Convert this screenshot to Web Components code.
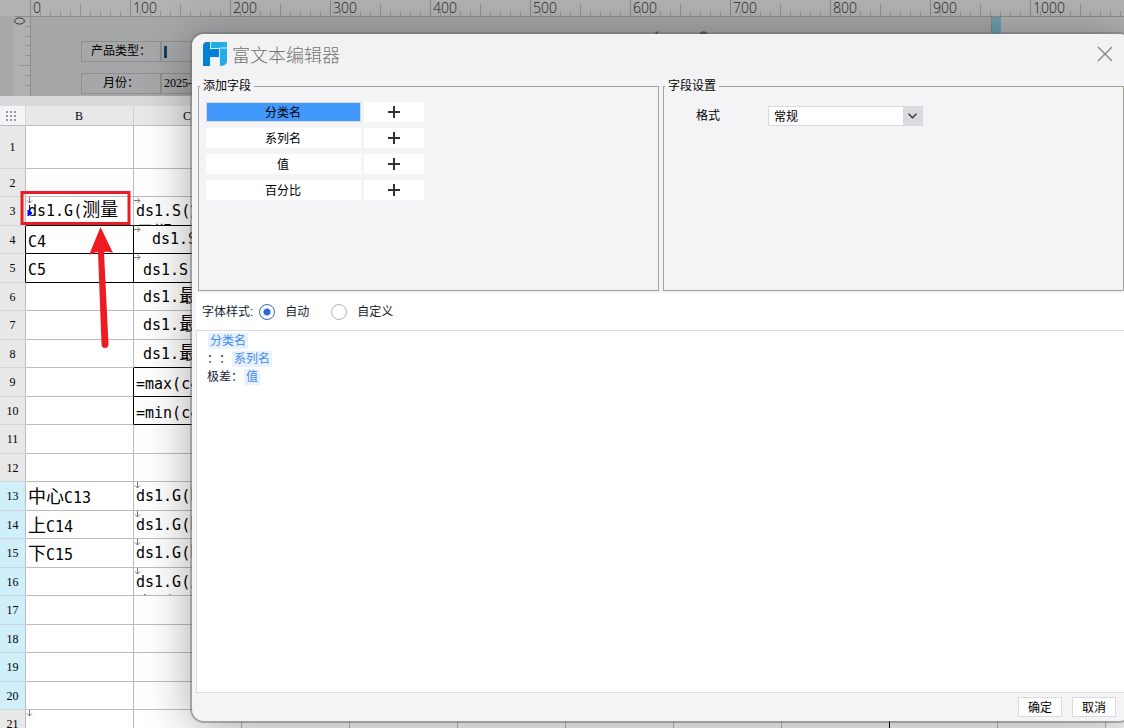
<!DOCTYPE html>
<html lang="zh-CN">
<head>
<meta charset="utf-8">
<title>富文本编辑器</title>
<style>
html, body { margin: 0; height: 100%; overflow: hidden; }
body { font: 12px/18px "Liberation Sans", "Noto Sans CJK SC", sans-serif; color: #000; text-spacing-trim: space-all; }
</style>
</head>
<body>
<report-designer>
  <param-pane slot="params"></param-pane>
  <report-sheet slot="sheet"></report-sheet>
  <red-marker slot="overlay"></red-marker>
  <modal-window slot="overlay" heading="富文本编辑器">
    <div slot="fields" style="display:contents">
      <field-group label="添加字段"><field-list></field-list></field-group>
      <field-group label="字段设置"><format-setting></format-setting></field-group>
    </div>
    <font-style-bar slot="style"></font-style-bar>
    <rich-editor slot="editor">
      <div><field-chip>分类名</field-chip></div>
      <div>：：<field-chip>系列名</field-chip></div>
      <div>极差：<field-chip>值</field-chip></div>
    </rich-editor>
    <push-button slot="actions">确定</push-button>
    <push-button slot="actions">取消</push-button>
  </modal-window>
</report-designer>

<script>
function define(name, html, setup) {
  customElements.define(name, class extends HTMLElement {
    connectedCallback() {
      if (this.shadowRoot) return;
      const root = this.attachShadow({ mode: 'open' });
      root.innerHTML = html;
      if (setup) setup(root, this);
    }
  });
}

define('report-designer', `
<style>
:host { display: flex; flex-direction: column; position: relative; height: 100vh; overflow: hidden; background: #d9d9dc; }
main { flex: 1; min-height: 0; overflow: hidden; padding-top: 10px; }
</style>
<slot name="params"></slot>
<main><slot name="sheet"></slot></main>
<slot name="overlay"></slot>`);

define('ruler-unit', `
<style>
:host { display: block; flex: none; box-sizing: border-box; width: 100px; height: 16px; padding-left: 3px;
  font: 300 14px/16px "Open Sans", sans-serif; color: #222;
  background:
    linear-gradient(#8b8b8b, #8b8b8b) 0 0 / 1px 16px no-repeat,
    linear-gradient(#929292, #929292) 50px 4px / 1px 12px no-repeat,
    repeating-linear-gradient(90deg, #929292 0 1px, transparent 1px 10px) 0 11px / 100px 5px no-repeat; }
</style>
<slot></slot>`);

define('param-pane', `
<style>
:host { display: grid; grid-template: 16px 80px / 14px 17px 1fr; flex: none; overflow: hidden; background: #a9a9a9; }
.top { grid-column: 1 / -1; display: flex; padding-left: 30px; background: #b2b2b2; min-width: 0; overflow: hidden; }
.side { grid-column: 2; background: #b0b0b0; border-right: 1px solid #8b8b8b; border-top: 1px solid #8b8b8b; display: block; }
.board { display: flex; border-top: 1px solid #8b8b8b; background: #b0b0b0; }
.canvas { width: 961px; flex: none; background: #a5a7a9; border-right: 1px solid #858585; position: relative; box-sizing: border-box; padding: 24px 0 0 50px; }
.bar { width: 9px; background: #6c9fac; }
form { display: grid; grid-template-columns: 79px 130px; row-gap: 11px; }
form > * { box-sizing: border-box; height: 21px; border: 1px solid #8e8e8e; }
label { text-align: center; line-height: 19px; border-right: 0 !important; }
input { font: 12px/19px "Liberation Serif", serif; background: transparent; padding: 0 2px; border-left-width: 2px !important; min-width: 0; width: 130px; border-radius: 0; color: #000; }
.mark { position: absolute; left: 133px; top: 29px; width: 3px; height: 12px; background: #163c66; }
.title { position: absolute; left: 618px; top: 12px; }
</style>
<div class="top"></div>
<svg class="side" width="16" height="79" viewBox="0 0 16 79">
  <path d="M11 9.500h5M11 19.500h5M11 28.500h5M11 38.500h5M5 48.500h11M11 58.500h5M11 68.500h5" stroke="#929292"/>
  <ellipse cx="5.500" cy="4" rx="4.800" ry="3" fill="none" stroke="#333"/>
</svg>
<div class="board">
  <div class="canvas">
    <form>
      <label for="type">产品类型：</label><input id="type">
      <label for="month">月份：</label><input id="month" value="2025-10">
    </form>
    <i class="mark"></i>
    <svg class="title" width="60" height="8" aria-hidden="true"><path d="M5 5l4-3v2l-2 3zM50 7c0-6 9-6 9 0z" fill="#333"/></svg>
  </div>
  <div class="bar"></div>
</div>`, root => {
  const top = root.querySelector('.top');
  for (let v = 0; v <= 1000; v += 100) {
    const unit = document.createElement('ruler-unit');
    unit.textContent = v;
    top.append(unit);
  }
});

const cells = {
  B3: { text: 'ds1.G(测量', cls: 'top', mark: 'down' },
  C3: { text: 'ds1.S(测量\n日期)', cls: 'top', mark: 'right' },
  B4: { text: 'C4' }, C4: { text: 'ds1.S(', cls: 'top in2', mark: 'right' },
  B5: { text: 'C5' }, C5: { text: 'ds1.S', cls: 'in1', mark: 'right' },
  C6: { text: 'ds1.最大', cls: 'top in1' },
  C7: { text: 'ds1.最小', cls: 'top in1' },
  C8: { text: 'ds1.最近', cls: 'top in1' },
  C9: { text: '=max(c4)' }, C10: { text: '=min(c4)' },
  B13: { text: '中心C13' }, C13: { text: 'ds1.G(时', cls: 'top', mark: 'down' },
  B14: { text: '上C14' }, C14: { text: 'ds1.G(时', cls: 'top', mark: 'down' },
  B15: { text: '下C15' }, C15: { text: 'ds1.G(时', cls: 'top', mark: 'down' },
  C16: { text: 'ds1.G(人\n类别)', cls: 'top', mark: 'down' },
  B21: { text: '', mark: 'down' }
};
const boxed = { B3: 'bb', C3: 'bb', B4: 'bb br', C4: 'bb br', B5: 'bb br', C5: 'bb br', C8: 'bb', B9: 'br', C9: 'bb br', B10: 'br', C10: 'bb br', I21: 'br' };
const marks = {
  down: '<svg class="mark" viewBox="0 0 7 7"><path d="M3.500 0v6M1 3.500l2.500 2.500L6 3.500" /></svg>',
  right: '<svg class="mark" viewBox="0 0 7 7"><path d="M0 3.500h6M3.500 1L6 3.500 3.500 6" /></svg>'
};

define('report-sheet', `
<style>
:host { display: block; }
table { border-collapse: separate; border-spacing: 0; table-layout: fixed; width: 1214px; background: #fff; }
col.head { width: 26px; } col.data { width: 108px; }
th, td { padding: 0; box-sizing: border-box; border-right: 1px solid #bcbcbc; border-bottom: 1px solid #bcbcbc; }
th { background: #e8e8e8; font: 400 12px/18px "Liberation Serif", serif; text-align: center; }
thead th { height: 20px; border-right-color: #cfcfcf; padding-right: 1px; }
thead th:first-child { background: #f4f4f8; border-right-color: #d5d5db; }
thead svg { display: block; margin: 1px 0 0 6px; }
tbody th { font: 400 12px/18px "Liberation Serif", serif; border-bottom-color: #d4d4da; }
tr.blue th { background: #cfeffa; }
tbody tr:nth-child(odd) { height: 29px; }
tbody tr:nth-child(even) { height: 28px; }
tbody tr:first-child { height: 43px; }
.cell { position: relative; box-sizing: border-box; overflow: hidden; white-space: pre; height: 27px; padding-left: 2px; font: 15px/32px "DejaVu Sans Mono", monospace; }
tr:nth-child(odd) .cell { height: 28px; }
.cell span { font: 18px/18px "Noto Sans CJK SC", sans-serif; }
.cell.top { line-height: 22px; padding-top: 2px; } .in1 { padding-left: 9px; } .in2 { padding-left: 18px; }
.mark { position: absolute; left: 0; top: 0; width: 7px; height: 7px; fill: none; stroke: #777; }
.bb { border-bottom-color: #000; } .br, th.br { border-right-color: #000; }
</style>
<table><colgroup></colgroup><thead></thead><tbody></tbody></table>`, root => {
  const letters = 'BCDEFGHIJKL'.split('');
  root.querySelector('colgroup').innerHTML = '<col class="head">' + letters.map(() => '<col class="data">').join('');
  let dots = '';
  for (let y = 0; y < 3; y++) for (let x = 0; x < 3; x++) dots += `<rect x="${x * 4}" y="${y * 4}" width="2" height="2"/>`;
  root.querySelector('thead').innerHTML = `<tr><th><svg width="11" height="10" fill="#999">${dots}</svg></th>` +
    letters.map(l => `<th scope="col">${l}</th>`).join('') + '</tr>';
  let rows = '';
  for (let r = 1; r <= 21; r++) {
    rows += `<tr class="${r > 12 && r < 21 ? 'blue' : ''}"><th scope="row" class="${r === 4 || r === 5 ? 'br' : ''}">${r}</th>`;
    for (const l of letters) {
      const c = cells[l + r];
      const body = c ? `<div class="cell ${c.cls || ''}">${marks[c.mark] || ''}${c.text.replace(/[\u4e00-\u9fff]+/g, '<span>$&</span>')}</div>` : '';
      rows += `<td class="${boxed[l + r] || ''}">${body}</td>`;
    }
    rows += '</tr>';
  }
  root.querySelector('tbody').innerHTML = rows;
});

define('red-marker', `
<style>:host { display: block; position: absolute; left: 20px; top: 190px; } svg { display: block; }</style>
<svg width="112" height="160" viewBox="0 0 112 160">
  <path d="M9.500 15v10M8 20l4 3-4 3z" stroke="#00f" fill="#00f"/>
  <rect x="2" y="2.500" width="107" height="31" fill="none" stroke="#ed1c24" stroke-width="3"/>
  <path d="M80.500 37L93 63Q88 61 84 62L88.500 154Q88.500 158 85 158Q81.500 158 81.500 154L78 62Q74 62 69 65Z" fill="#ed1c24"/>
</svg>`);

define('modal-window', `
<style>
:host { position: absolute; inset: 34px -7px 7px 192px; display: flex; flex-direction: column; border-radius: 12px; background: #f4f4f7;
  box-shadow: 0 0 0 2px rgba(110,110,110,.5), 0 6px 50px rgba(0,0,0,.36); }
header { display: flex; align-items: center; gap: 5px; height: 43px; box-sizing: border-box; padding: 0 18px 3px 11px; background: #f2f2f2; border-radius: 12px 12px 0 0; flex: none; }
h1 { flex: 1; margin: 0; font: 300 18px/24px "Noto Sans CJK SC", sans-serif; color: #757575; }
header button { border: 0; padding: 0; background: none; width: 16px; height: 16px; }
svg { display: block; }
.fields { display: flex; gap: 4px; padding: 0 7px 0 6px; }
.lower { flex: 1; display: flex; flex-direction: column; min-height: 0; margin: 2px 0 0 4px; background: #fff; }
footer { display: flex; justify-content: flex-end; gap: 10px; padding: 4px 15px 4px 0; }
</style>
<header>
  <svg width="24" height="24" viewBox="0 0 24 24">
    <path d="M4 0H8V6.500H15V15H7V24H0V4Q0 0 4 0Z" fill="#0580d8"/>
    <path d="M8 0H24V20Q23 24 17 24V14H16V6.500H8Z" fill="#22ade6"/>
    <path d="M7 7H16V15H7Z" fill="#0580d8"/>
    <path d="M7.500 0V7.500M7.500 6.500H15M16.500 24V6H24M7.500 24V15.500H16" fill="none" stroke="#d6effb"/>
  </svg>
  <h1></h1>
  <button aria-label="关闭"><svg width="16" height="16" viewBox="0 0 16 16"><path d="M1 1l14 14M15 1L1 15" stroke="#858585" stroke-width="1.300"/></svg></button>
</header>
<div class="fields"><slot name="fields"></slot></div>
<div class="lower"><slot name="style"></slot><slot name="editor"></slot></div>
<footer><slot name="actions"></slot></footer>`, (root, host) => {
  root.querySelector('h1').textContent = host.getAttribute('heading');
});

define('field-group', `
<style>
:host { display: block; flex: 1; min-width: 0; }
fieldset { box-sizing: border-box; height: 214px; margin: 0; border: 1px solid #a2a298; padding: 7px; min-width: 0; }
legend { padding: 0 3px; margin-left: -6px; line-height: 18px; }
</style>
<fieldset><legend></legend><slot></slot></fieldset>`, (root, host) => {
  root.querySelector('legend').textContent = host.getAttribute('label');
});

define('field-list', `
<style>
:host { display: grid; grid-template-columns: 155px 60px; gap: 6px 3px; }
button { height: 20px; border: 0; padding: 0 1px 0 0; background: #fff; font: inherit; line-height: 22px; color: #000; display: grid; place-items: center; border-radius: 0; }
.selected { background: #4099fa; border: 1px solid #d6d8dc; line-height: 20px; }
</style>`, root => {
  root.innerHTML += ['分类名', '系列名', '值', '百分比'].map((n, i) =>
    `<button class="${i ? '' : 'selected'}">${n}</button><button aria-label="添加${n}"><svg width="12" height="12"><path d="M6 0v12M0 6h12" stroke="#333" stroke-width="2"/></svg></button>`).join('');
});

define('format-setting', `
<style>
:host { display: grid; grid-template-columns: 72px 155px; align-items: center; padding: 4px 0 0 25px; }
label { line-height: 20px; }
.box { display: grid; align-items: center; }
select, .box svg { grid-area: 1 / 1; }
select { appearance: none; height: 20px; box-sizing: border-box; border: 1px solid #d8dade; border-radius: 0; padding: 0 24px 0 5px; font: inherit; line-height: 20px; color: #000;
  background: linear-gradient(#d8dade, #d8dade) right / 19px 100% no-repeat #fff; }
.box svg { justify-self: end; margin-right: 6px; pointer-events: none; }
</style>
<label for="format">格式</label>
<div class="box"><select id="format"><option>常规</option></select>
<svg width="9" height="6" viewBox="0 0 9 6"><path d="M.5 .8L4.500 4.800 8.500 .8" fill="none" stroke="#333" stroke-width="1.300"/></svg></div>`);

define('font-style-bar', `
<style>
:host { display: flex; align-items: center; height: 37px; flex: none; padding-left: 6px; color: #141c30; }
label { display: flex; align-items: center; gap: 10px; margin-right: 22px; }
.name { margin-right: 6px; }
input { appearance: none; box-sizing: border-box; width: 16px; height: 16px; margin: 0; border: 1px solid #b0b4bc; border-radius: 50%; background: #fff; }
input:checked { border-color: #2f65dc; background: radial-gradient(circle, #2f65dc 3px, #fff 4px); }
</style>
<span class="name">字体样式:</span>
<label><input type="radio" name="mode" checked>自动</label>
<label><input type="radio" name="mode">自定义</label>`);

define('rich-editor', `
<style>
:host { display: block; flex: 1; min-height: 0; border: solid #d9dae2; border-width: 1px 0 1px 1px; }
div { padding: 1px 10px; line-height: 18px; color: #141c30; outline: 0; }
::slotted(div) { min-height: 18px; }
</style>
<div contenteditable="true" role="textbox" aria-label="内容"><slot></slot></div>`);

define('field-chip', `
<style>:host { display: inline-block; line-height: 16px; padding: 0 2px; margin: 1px; color: #3f8bf0; background: #e8f1fe; }</style>
<slot></slot>`);

define('push-button', `
<style>
:host { display: block; }
button { display: block; width: 44px; height: 20px; box-sizing: border-box; border: 1px solid #d8dade; border-radius: 0; background: #fff; padding: 0; font: inherit; line-height: 20px; color: #000; }
</style>
<button><slot></slot></button>`);
</script>
</body>
</html>
